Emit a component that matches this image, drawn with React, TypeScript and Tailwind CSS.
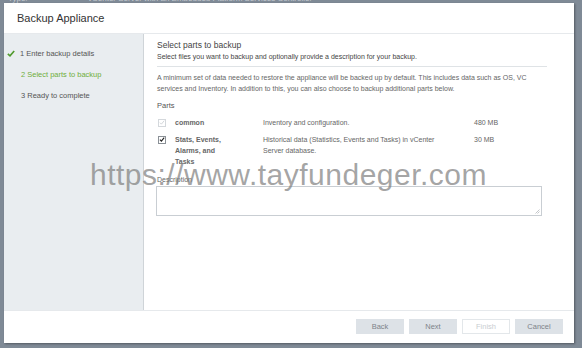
import React from "react";

const font = { fontFamily: '"Liberation Sans", Arial, sans-serif' };

function Check({ disabled }: { disabled?: boolean }) {
  return (
    <div
      className={`w-[8px] h-[8px] border flex items-center justify-center ${
        disabled ? "border-[#d4d8dc] bg-white" : "border-[#8a9096] bg-white"
      }`}
    >
      <svg width="7" height="7" viewBox="0 0 8 8">
        <path
          d="M1.2 4.2 L3.2 6.2 L6.9 1.6"
          fill="none"
          stroke={disabled ? "#c4c9ce" : "#222"}
          strokeWidth={disabled ? 1 : 1.5}
        />
      </svg>
    </div>
  );
}

export default function App() {
  return (
    <div
      className="w-[582px] h-[348px] bg-[#7f8a96] relative overflow-hidden"
      style={font}
    >
      <div className="h-[3px] overflow-hidden">
        <div className="flex -mt-[6px] text-[8px] leading-[9px] text-[#c3c9d0]">
          <span className="ml-[8px] w-[80px]">Type:</span>
          <span>vCenter Server with an Embedded Platform Services Controller</span>
        </div>
      </div>
      <div className="ml-[4px] w-[570px] h-[340px] bg-white flex flex-col shadow-[1px_1px_2px_rgba(0,0,0,0.35)]">
        <div className="h-[31px] border-b border-[#e6e9ec] flex items-center pl-[13px] text-[11px] text-[#333]">
          Backup Appliance
        </div>
        <div className="flex-1 flex min-h-0">
          <div className="w-[140px] bg-[#e9edf0] border-r border-[#cfd4d8] pt-[9px] text-[7.5px] text-[#555]">
            <div className="h-[21px] flex items-center">
              <svg className="ml-[3px] mr-[5px]" width="8" height="7" viewBox="0 0 8 7">
                <path d="M0.8 3.8 L3 5.8 L7.2 0.9" fill="none" stroke="#4f9a2c" strokeWidth="1.6" />
              </svg>
              <span>1 Enter backup details</span>
            </div>
            <div className="h-[21px] flex items-center pl-[17px] text-[#6fae3c]">
              2 Select parts to backup
            </div>
            <div className="h-[21px] flex items-center pl-[17px]">
              3 Ready to complete
            </div>
          </div>
          <div className="flex-1 pl-[13px] pr-[27px] pt-[6px] text-[#555]">
            <div className="text-[8.5px] leading-[11px] text-[#444]">
              Select parts to backup
            </div>
            <div className="text-[7px] leading-[11px] pb-[4px] border-b border-[#dfe3e6] text-[#444]">
              Select files you want to backup and optionally provide a description for your backup.
            </div>
            <div className="mt-[5px] text-[7px] leading-[11px] text-[#666]">
              A minimum set of data needed to restore the appliance will be backed up by default. This includes data such as OS, VC services and Inventory. In addition to this, you can also choose to backup additional parts below.
            </div>
            <div className="mt-[6px] text-[7.5px] leading-[11px] text-[#555]">Parts</div>
            <div className="mt-[6px] flex text-[7px] leading-[11px]">
              <div className="w-[18px] pl-[1px] pt-[1.5px]">
                <Check disabled />
              </div>
              <div className="w-[88px] pr-[34px] font-bold text-[#666]">common</div>
              <div className="w-[211px] pr-[22px] text-[#666]">Inventory and configuration.</div>
              <div className="text-[#666]">480 MB</div>
            </div>
            <div className="mt-[6px] flex text-[7px] leading-[11px]">
              <div className="w-[18px] pl-[1px] pt-[1.5px]">
                <Check />
              </div>
              <div className="w-[88px] pr-[34px] font-bold text-[#666]">
                Stats, Events, Alarms, and Tasks
              </div>
              <div className="w-[211px] pr-[22px] text-[#666]">
                Historical data (Statistics, Events and Tasks) in vCenter Server database.
              </div>
              <div className="text-[#666]">30 MB</div>
            </div>
            <div className="mt-[7px] text-[7px] leading-[11px] text-[#666]">Description</div>
            <div className="mt-[1px] ml-[-1px] w-[386px] h-[30px] border border-[#c9ced3] relative">
              <svg className="absolute right-[1px] bottom-[1px]" width="5" height="5" viewBox="0 0 5 5">
                <path d="M4.5 0.5 L0.5 4.5 M4.5 2.5 L2.5 4.5" stroke="#b5b9bd" strokeWidth="0.8" />
              </svg>
            </div>
          </div>
        </div>
        <div className="h-[33px] border-t border-[#e6e9ec] flex justify-end items-start pt-[8px] pr-[11px] gap-[5px] text-[7.5px]">
          <div className="w-[48px] h-[15px] bg-[#dde2e7] text-[#7d8389] flex items-center justify-center">Back</div>
          <div className="w-[48px] h-[15px] bg-[#dde2e7] text-[#7d8389] flex items-center justify-center">Next</div>
          <div className="w-[48px] h-[15px] bg-white border border-[#e3e7ea] text-[#c9cdd1] flex items-center justify-center">Finish</div>
          <div className="w-[48px] h-[15px] bg-[#dde2e7] text-[#7d8389] flex items-center justify-center">Cancel</div>
        </div>
      </div>
      <div
        className="absolute left-[90px] top-[160px] text-[30px] leading-[30px] tracking-[0.5px] text-[rgba(125,125,125,0.7)] whitespace-nowrap pointer-events-none"
        style={font}
      >
        https://www.tayfundeger.com
      </div>
    </div>
  );
}
